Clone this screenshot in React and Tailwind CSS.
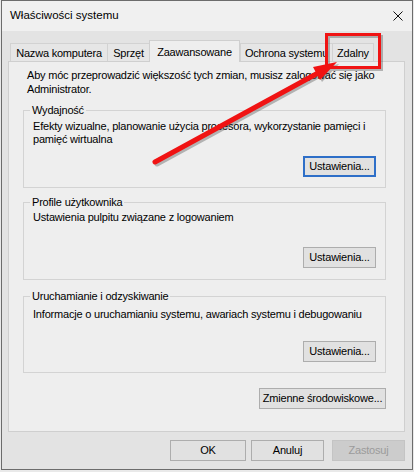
import React from 'react';

const font = "font-['Liberation_Sans','Arial',sans-serif]";

const Btn = ({ children, w = 'w-[73px]', focused = false, disabled = false }) => (
  <button
    className={
      `${w} h-[21px] flex items-center justify-center whitespace-nowrap leading-none ` +
      (focused
        ? 'border-2 border-[#2e6fc8] bg-[#e1e1e1] text-black'
        : disabled
        ? 'border border-[#c4c4c4] bg-[#cccccc] text-[#9b9b9b]'
        : 'border border-[#adadad] bg-[#e1e1e1] text-black')
    }
  >
    {children}
  </button>
);

const Group = ({ title, className = '', textClass = '', btnClass = '', focused, children }) => (
  <fieldset className={`ml-[14px] w-[363px] min-w-0 border border-[#d3d3d3] px-[9px] ${className}`}>
    <legend className="-ml-[3px] px-[2px] leading-[14px] whitespace-nowrap">{title}</legend>
    <div className={`leading-[13px] whitespace-nowrap ${textClass}`}>{children}</div>
    <div className={`flex justify-end ${btnClass}`}>
      <Btn focused={focused}>Ustawienia...</Btn>
    </div>
  </fieldset>
);

const Tab = ({ label, w, selected, last }) =>
  selected ? (
    <div className={`${w} h-[22px] -mb-px relative z-10 bg-[#eeeeee] border-t border-l border-r border-[#cfcfcf] flex justify-center pt-[4px] leading-[14px] whitespace-nowrap`}>
      {label}
    </div>
  ) : (
    <div className={`${w} h-[18px] bg-[#e6e6e6] border-t border-l ${last ? 'border-r' : ''} border-[#d2d2d2] flex justify-center pt-[2px] leading-[14px] whitespace-nowrap`}>
      {label}
    </div>
  );

export default function App() {
  return (
    <div className={`relative w-[414px] h-[472px] bg-[#e9e9e9] text-[11px] tracking-[-0.2px] text-black ${font}`}>
      <div className="ml-px w-[412px] h-[470px] border border-[#6c6c6c] flex flex-col bg-[#e3e3e3]">
        {/* title bar */}
        <div className="h-[30px] bg-[#f0f0f0] flex items-center pl-[8px] pr-[9px]">
          <span className="text-[11.5px] tracking-normal">Właściwości systemu</span>
          <svg className="ml-auto" width="10" height="10" viewBox="0 0 10 10">
            <path d="M0.5 0.5 L9.5 9.5 M9.5 0.5 L0.5 9.5" stroke="#111" strokeWidth="1" />
          </svg>
        </div>

        <div className="flex-1 flex flex-col px-[6px] pt-[9px]">
          {/* tabs */}
          <div className="h-[21px] flex items-end pl-[2px]">
            <Tab label="Nazwa komputera" w="w-[97px]" />
            <Tab label="Sprzęt" w="w-[42px]" />
            <Tab label="Zaawansowane" w="w-[91px]" selected />
            <Tab label="Ochrona systemu" w="w-[92px]" />
            <Tab label="Zdalny" w="w-[42px]" last />
          </div>

          {/* tab page */}
          <div className="w-[397px] h-[371px] border border-[#cfcfcf] bg-[#eeeeee] flex flex-col">
            <p className="pl-[18px] pt-[6px] leading-[14px] whitespace-nowrap">
              Aby móc przeprowadzić większość tych zmian, musisz zalogować się jako
              <br />
              Administrator.
            </p>

            <Group title="Wydajność" className="mt-[7px] pb-[10px]" textClass="mt-[3px]" btnClass="mt-[10px]" focused>
              Efekty wizualne, planowanie użycia procesora, wykorzystanie pamięci i
              <br />
              pamięć wirtualna
            </Group>

            <Group title="Profile użytkownika" className="mt-[7px] pb-[11px]" textClass="mt-[1px] leading-[14px]" btnClass="mt-[23px]">
              Ustawienia pulpitu związane z logowaniem
            </Group>

            <Group title="Uruchamianie i odzyskiwanie" className="mt-[9px] pb-[10px]" textClass="mt-[4px] leading-[14px]" btnClass="mt-[20px]">
              Informacje o uruchamianiu systemu, awariach systemu i debugowaniu
            </Group>

            <div className="flex justify-end pr-[18px] mt-[15px]">
              <Btn w="w-[127px]">Zmienne środowiskowe...</Btn>
            </div>
          </div>

          {/* dialog buttons */}
          <div className="flex justify-end pr-px mt-[8px]">
            <Btn w="w-[76px]">OK</Btn>
            <div className="w-[5px]" />
            <Btn>Anuluj</Btn>
            <div className="w-[8px]" />
            <Btn disabled>Zastosuj</Btn>
          </div>
        </div>
      </div>

      {/* red annotation overlay */}
      <svg className="absolute inset-0 pointer-events-none" width="414" height="472" viewBox="0 0 414 472">
        <g opacity="0.35" transform="translate(2 2)">
          <rect x="326.5" y="34.5" width="53" height="33" fill="none" stroke="#444" strokeWidth="3" />
          <line x1="155" y1="162" x2="318" y2="73" stroke="#444" strokeWidth="5" strokeLinecap="round" />
          <polygon points="337,62 320,80 313,67" fill="#444" />
        </g>
        <rect x="326.5" y="34.5" width="53" height="33" fill="none" stroke="#f01313" strokeWidth="3" />
        <line x1="155" y1="162" x2="318" y2="73" stroke="#f01313" strokeWidth="5" strokeLinecap="round" />
        <polygon points="337,62 320,80 313,67" fill="#f01313" />
      </svg>
    </div>
  );
}
